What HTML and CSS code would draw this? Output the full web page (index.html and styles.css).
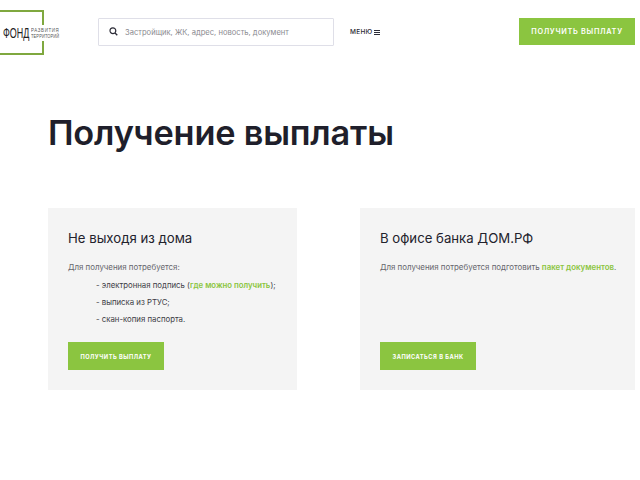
FILE: index.html
```html
<!DOCTYPE html>
<html lang="ru">
<head>
<meta charset="utf-8">
<title>Получение выплаты</title>
<link rel="stylesheet" href="styles.css">
</head>
<body>
<div class="page">
  <header class="header">
    <a class="logo">
      <span class="logo-main">ФОНД</span>
      <span class="logo-sub"><span class="logo-line-a">РАЗВИТИЯ</span><span class="logo-line-b">ТЕРРИТОРИЙ</span></span>
    </a>
    <div class="search">
      <svg class="search-icon" width="9" height="9" viewBox="0 0 9 9"><circle cx="3.9" cy="3.7" r="2.9" fill="none" stroke="#2b2b36" stroke-width="1.2"/><path d="M6 6l2.3 2.3" stroke="#2b2b36" stroke-width="1.3"/></svg>
      <span class="search-text">Застройщик, ЖК, адрес, новость, документ</span>
    </div>
    <a class="menu">МЕНЮ
      <svg width="6" height="5" viewBox="0 0 6 5"><path d="M0 .5h6M0 2.5h6M0 4.5h6" stroke="#2b2b36" stroke-width="1"/></svg>
    </a>
    <a class="btn btn-top">ПОЛУЧИТЬ ВЫПЛАТУ</a>
  </header>
  <main class="main">
    <h1 class="title">Получение выплаты</h1>
    <div class="cards">
      <section class="card card-left">
        <h2 class="card-title">Не выходя из дома</h2>
        <p class="card-text">Для получения потребуется:</p>
        <ul class="list">
          <li>- электронная подпись (<a class="link">где можно получить</a>);</li>
          <li>- выписка из РТУС;</li>
          <li>- скан-копия паспорта.</li>
        </ul>
        <a class="btn btn-card">ПОЛУЧИТЬ ВЫПЛАТУ</a>
      </section>
      <section class="card card-right">
        <h2 class="card-title">В офисе банка ДОМ.РФ</h2>
        <p class="card-text">Для получения потребуется подготовить <a class="link">пакет документов</a>.</p>
        <a class="btn btn-card">ЗАПИСАТЬСЯ В БАНК</a>
      </section>
    </div>
  </main>
</div>
</body>
</html>
```
FILE: styles.css
```css
* { box-sizing: border-box; }
html, body { margin: 0; padding: 0; background: #fff; }
body { font-family: Inter, "Noto Sans", sans-serif; color: #22222c; width: 640px; height: 480px; overflow: hidden; }
.page { width: 635px; }
.header { display: flex; align-items: flex-start; height: 60px; padding-top: 18px; }
.logo { width: 44px; height: 45px; margin-top: -8px; border: 2px solid #7fa83f; border-left: 0; display: flex; align-items: center; padding-left: 3px; flex-shrink: 0; white-space: nowrap; margin-right: 54px; }
.logo-main { font-family: "Liberation Sans", sans-serif; font-size: 14px; line-height: 12px; color: #222; transform: scaleX(.64); transform-origin: left center; width: 28px; flex-shrink: 0; }
.logo-sub { display: flex; flex-direction: column; font-family: "Liberation Sans", sans-serif; font-size: 5.5px; line-height: 6px; color: #555; background: #fff; position: relative; padding: 2px 2px 2px 0; flex-shrink: 0; }
.logo-line-a { letter-spacing: .8px; transform: scaleX(.8); transform-origin: left center; }
.logo-line-b { transform: scaleX(.72); transform-origin: left center; letter-spacing: .2px; }
.search { width: 236px; height: 28px; border: 1px solid #dfdfe8; display: flex; align-items: center; padding-left: 10px; gap: 7px; border-radius: 1px; margin-right: 16px; }
.search-icon { margin-top: -2px; }
.search-text { font-size: 7.6px; color: #8b8b90; white-space: nowrap; }
.menu { font-size: 6.5px; font-weight: 500; color: #2b2b36; display: flex; align-items: center; gap: 1px; height: 28px; letter-spacing: .3px; margin-right: auto; }
.btn { background: #8bc540; color: #fff; font-weight: 700; display: flex; align-items: center; justify-content: center; white-space: nowrap; }
.btn-top { width: 116px; height: 27px; font-size: 7.3px; letter-spacing: .7px; font-weight: 600; }
.main { padding-left: 48px; }
.title { margin: 51px 0 0; font-size: 34.3px; line-height: 44px; font-weight: 600; color: #1f1f2b; letter-spacing: -.2px; }
.cards { display: flex; margin-top: 53px; gap: 63px; }
.card { background: #f4f4f4; height: 182px; padding: 20px; display: flex; flex-direction: column; position: relative; }
.card-left { width: 249px; }
.card-right { width: 275px; }
.card-title { margin: 0; font-size: 13.2px; line-height: 20px; font-weight: 400; color: #22222c; }
.card-text { margin: 13px 0 0; font-size: 7.9px; line-height: 12px; color: #66666c; white-space: nowrap; }
.list { list-style: none; margin: 6px 0 0; padding: 0 0 0 28px; font-size: 7.8px; line-height: 12px; color: #3c3c44; white-space: nowrap; }
.list li { margin-bottom: 5px; }
.link { color: #8bc540; font-weight: 600; }
.btn-card { position: absolute; left: 20px; top: 134px; width: 96px; height: 28px; font-size: 5.7px; letter-spacing: .5px; }
```
